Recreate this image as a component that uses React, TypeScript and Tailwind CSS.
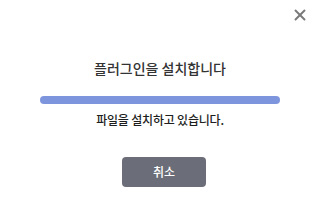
import { X } from "lucide-react";

export default function App() {
  return (
    <div className="relative flex h-[215px] w-[320px] flex-col items-center bg-white font-['Noto_Sans_CJK_KR',sans-serif] text-[#333]">
      <button className="absolute right-[11px] top-[6px] text-[#7a7a7a]">
        <X size={18} strokeWidth={2.6} />
      </button>
      <h1 className="mt-[58px] text-[14px] leading-[20px] font-medium text-[#333]">플러그인을 설치합니다</h1>
      <div className="mt-[18px] h-[8px] w-[240px] rounded-full bg-[#7d95dd]" />
      <p className="mt-[7px] text-[12px] leading-[18px] font-medium tracking-[-0.2px] text-[#1e1e1e]">파일을 설치하고 있습니다.</p>
      <button className="ml-[8px] mt-[28px] h-[30px] w-[84px] rounded-[4px] bg-[#6b6e78] text-[12px] font-medium text-white">
        취소
      </button>
    </div>
  );
}
